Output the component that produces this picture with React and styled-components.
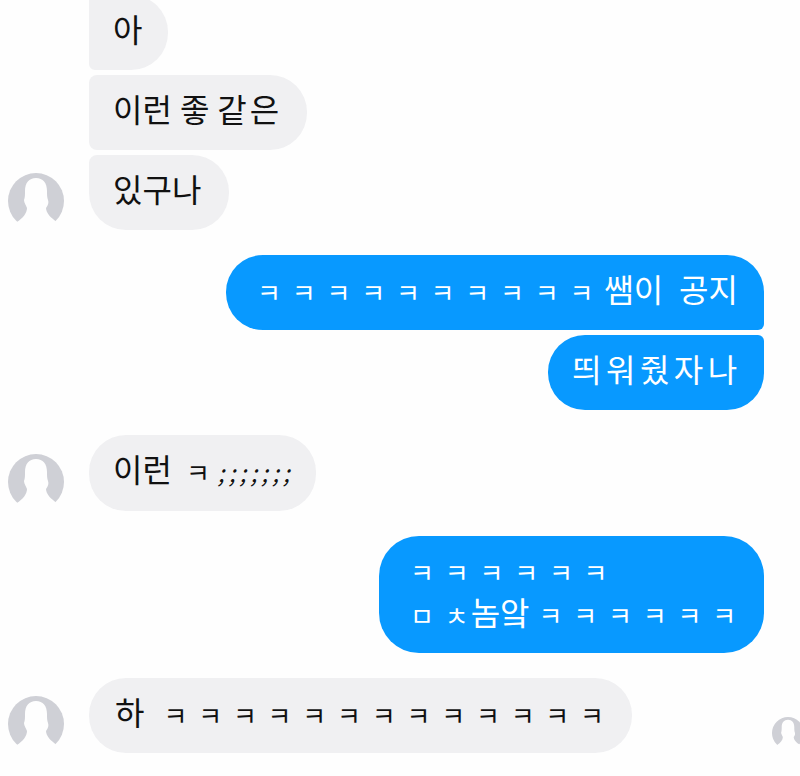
import React from 'react';
import styled, {createGlobalStyle} from "styled-components";

const GlobalStyle = createGlobalStyle`
  html, body {
    margin: 0;
    height: 776px;
    overflow: hidden;
    background: #fefefe;
    font-family: "Noto Sans CJK KR", "Noto Sans", sans-serif;
  }
`
const Thread = styled.div`
  display: flex;
  flex-direction: column;
  margin-top: -5px;
  padding-left: 8px;
`
const Group = styled.div`
  display: flex;
  flex-direction: column;
  align-items: ${({$mine}) => $mine ? "flex-end" : "flex-start"};
  gap: 5px;
  margin-bottom: 25px;
  padding-right: ${({$mine}) => $mine ? "36px" : "0"};
`
const Row = styled.div`
  display: flex;
  align-items: flex-end;
  width: 100%;
`
const AvatarSlot = styled.div`
  flex: none;
  width: 56px;
  height: 56px;
  margin: 0 25px 1px 0;
`
const ReadMark = styled.div`
  flex: none;
  width: 32px;
  height: 32px;
  margin: 0 -4px 4px auto;
`
const Bubble = styled.div`
  box-sizing: border-box;
  display: flex;
  flex-direction: column;
  justify-content: center;
  width: ${({$width}) => $width}px;
  min-height: ${({$height}) => $height || 75}px;
  padding: 0 0 3px ${({$pad}) => $pad || 24}px;
  border-radius: ${({$radius}) => $radius || "37px"};
  background: ${({$mine}) => $mine ? "#0899ff" : "#f0f0f2"};
  color: ${({$mine}) => $mine ? "#ffffff" : "#111111"};
  white-space: nowrap;
`
const Line = styled.div`
  display: flex;
  align-items: center;
  height: 43px;
`
const Word = styled.span`
  font-size: 32px;
  line-height: 43px;
  letter-spacing: ${({$spacing}) => $spacing || 0}px;
  margin: 0 ${({$after}) => $after || 0}px 6px 0;
`
const Laugh = styled.span`
  font-size: 26px;
  line-height: 43px;
  letter-spacing: ${({$flush}) => $flush ? 0 : 10.8}px;
  margin-right: ${({$after}) => $after || 0}px;
`
const Semi = styled.span`
  font-size: 24px;
  font-style: italic;
  line-height: 43px;
  letter-spacing: 4.2px;
`

const Avatar = () => (
    <svg width="100%" height="100%" viewBox="0 0 56 56">
        <circle cx="28" cy="28" r="28" fill="#cfd0d6"/>
        <path
            fill="#fefefe"
            d="M28 5C21 5 17 10 17 18C17 22 17 24 16 27C16 30 18 32 19 35C19 40 15 45 9 49L9 56L49 56L49 49C43 45 38 40 38 35C40 32 41 30 40 27C39 24 39 22 39 18C39 10 35 5 28 5Z"
        />
    </svg>
)

const App = () => (
    <>
        <GlobalStyle/>
        <Thread>
            <Group>
                <Row>
                    <AvatarSlot/>
                    <Bubble $width={79} $radius="6px 37px 37px 6px"><Line><Word>아</Word></Line></Bubble>
                </Row>
                <Row>
                    <AvatarSlot/>
                    <Bubble $width={218} $radius="8px 37px 37px 8px">
                        <Line><Word $after={8}>이런</Word><Word $after={8}>좋</Word><Word $spacing={3}>같은</Word></Line>
                    </Bubble>
                </Row>
                <Row>
                    <AvatarSlot><Avatar/></AvatarSlot>
                    <Bubble $width={140} $radius="8px 37px 37px 37px"><Line><Word>있구나</Word></Line></Bubble>
                </Row>
            </Group>
            <Group $mine>
                <Bubble $mine $width={538} $pad={31} $radius="37px 37px 6px 37px">
                    <Line><Laugh>ㅋㅋㅋㅋㅋㅋㅋㅋㅋㅋ</Laugh><Word $after={16}>쌤이</Word><Word>공지</Word></Line>
                </Bubble>
                <Bubble $mine $width={216} $radius="37px 6px 37px 37px">
                    <Line><Word $spacing={4.5}>띄워줬자나</Word></Line>
                </Bubble>
            </Group>
            <Group>
                <Row>
                    <AvatarSlot><Avatar/></AvatarSlot>
                    <Bubble $width={227} $height={76}>
                        <Line><Word $after={14}>이런</Word><Laugh $flush $after={8}>ㅋ</Laugh><Semi>;;;;;;;</Semi></Line>
                    </Bubble>
                </Row>
            </Group>
            <Group $mine>
                <Bubble $mine $width={385} $height={117} $pad={31} $radius="40px">
                    <Line><Laugh>ㅋㅋㅋㅋㅋㅋ</Laugh></Line>
                    <Line><Laugh>ㅁ</Laugh><Laugh $flush $after={2}>ㅊ</Laugh><Word $after={9}>놈앜</Word><Laugh>ㅋㅋㅋㅋㅋㅋ</Laugh></Line>
                </Bubble>
            </Group>
            <Group>
                <Row>
                    <AvatarSlot><Avatar/></AvatarSlot>
                    <Bubble $width={543} $pad={26}>
                        <Line><Word $after={19}>하</Word><Laugh>ㅋㅋㅋㅋㅋㅋㅋㅋㅋㅋㅋㅋㅋ</Laugh></Line>
                    </Bubble>
                    <ReadMark><Avatar/></ReadMark>
                </Row>
            </Group>
        </Thread>
    </>
);

export default App;
